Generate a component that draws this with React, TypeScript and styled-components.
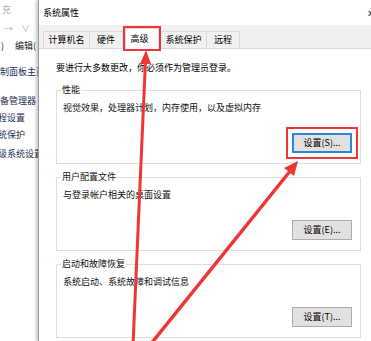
import styled, { createGlobalStyle } from 'styled-components';

const GlobalStyle = createGlobalStyle`
  html, body {
    margin: 0;
    padding: 0;
    background: #ffffff;
    overflow: hidden;
  }
  * {
    box-sizing: border-box;
  }
`;

const Screen = styled.div`
  position: relative;
  width: 371px;
  height: 341px;
  display: flex;
  overflow: hidden;
  font-family: "Noto Sans CJK SC", "Liberation Sans", sans-serif;
  font-size: 9px;
  color: #000;
  background: #fff;
`;

const LeftPanel = styled.div`
  width: 38px;
  flex-shrink: 0;
  display: flex;
  flex-direction: column;
  overflow: hidden;
  background: #fff;
`;

const LeftRow = styled.div<{ $gap: number; $indent?: number; $color?: string }>`
  margin-top: ${(p) => p.$gap}px;
  height: 12px;
  line-height: 12px;
  white-space: nowrap;
  text-indent: ${(p) => p.$indent ?? 0}px;
  color: ${(p) => p.$color ?? '#1c2f55'};
  display: flex;
  align-items: center;
`;

const NavGlyph = styled.span<{ $x: number; $dark?: boolean }>`
  margin-left: ${(p) => p.$x}px;
  color: ${(p) => (p.$dark ? '#222' : '#b4b4b4')};
  font-size: 9px;
`;

const Dialog = styled.div`
  flex: 1;
  display: flex;
  flex-direction: column;
  border-left: 1px solid #9c9c9c;
  box-shadow: -2px 0 3px rgba(0, 0, 0, 0.22);
  background: #fff;
  z-index: 1;
  overflow: hidden;
`;

const TitleBar = styled.div`
  height: 25px;
  display: flex;
  align-items: center;
  justify-content: space-between;
  padding-left: 4px;
  line-height: 12px;
`;

const CloseGlyph = styled.span`
  margin-right: -4px;
  font-size: 10px;
  color: #333;
`;

const TabStrip = styled.div`
  height: 24px;
  display: flex;
  align-items: flex-end;
  padding-left: 4px;
  background: #f0f0f0;
  border-bottom: 1px solid #d9d9d9;
`;

const Tab = styled.div<{ $active?: boolean }>`
  height: ${(p) => (p.$active ? 21 : 17)}px;
  min-width: 34px;
  padding: ${(p) => (p.$active ? '3px' : '0')} 4.5px 0;
  margin: 0 ${(p) => (p.$active ? '1px' : '-1px')} ${(p) => (p.$active ? '-1px' : '0')}
    ${(p) => (p.$active ? '3px' : '0')};
  line-height: ${(p) => (p.$active ? 13 : 16)}px;
  text-align: ${(p) => (p.$active ? 'left' : 'center')};
  border: 1px solid #d9d9d9;
  border-bottom: none;
  background: ${(p) => (p.$active ? '#fff' : '#f0f0f0')};
  outline: ${(p) => (p.$active ? '2px solid #ee3636' : 'none')};
  white-space: nowrap;
  position: relative;
  z-index: ${(p) => (p.$active ? 1 : 0)};
`;

const Content = styled.div`
  display: flex;
  flex-direction: column;
  gap: 7px;
  padding: 13px 10px 0 17px;
`;

const Intro = styled.div`
  line-height: 12px;
  margin-bottom: 3px;
  white-space: nowrap;
`;

const Group = styled.fieldset`
  margin: 0;
  padding: 0 8px 10px 6px;
  border: 1px solid #dedede;
  min-width: 0;
`;

const GroupTitle = styled.legend`
  padding: 0 1px;
  margin-left: -2px;
  line-height: 12px;
  color: #111;
`;

const Description = styled.div`
  margin-top: 6px;
  line-height: 12px;
  white-space: nowrap;
  color: #111;
`;

const ButtonRow = styled.div`
  margin-top: 19px;
  display: flex;
  justify-content: flex-end;
`;

const SettingsButton = styled.button<{ $focused?: boolean }>`
  width: 60px;
  height: 20px;
  padding: 0;
  font-family: inherit;
  font-size: 9px;
  line-height: 12px;
  color: #000;
  background: #e1e1e1;
  border: ${(p) => (p.$focused ? '2px solid #2a86d6' : '1px solid #adadad')};
  outline: ${(p) => (p.$focused ? '2px solid #ee3636' : 'none')};
  outline-offset: 4px;
`;

const Annotations = styled.svg`
  position: absolute;
  left: 0;
  top: 0;
  width: 371px;
  height: 341px;
  pointer-events: none;
  z-index: 5;
`;

const groups = [
  { title: '性能', text: '视觉效果，处理器计划，内存使用，以及虚拟内存', button: '设置(S)...', focused: true },
  { title: '用户配置文件', text: '与登录帐户相关的桌面设置', button: '设置(E)...' },
  { title: '启动和故障恢复', text: '系统启动、系统故障和调试信息', button: '设置(T)...' },
];

const tabs = ['计算机名', '硬件', '高级', '系统保护', '远程'];

export default function App() {
  return (
    <Screen>
      <GlobalStyle />
      <LeftPanel>
        <LeftRow $gap={4} $indent={2} $color="#b0b0b0">充</LeftRow>
        <LeftRow $gap={7}>
          <NavGlyph $x={4}>→</NavGlyph>
          <NavGlyph $x={8}>∨</NavGlyph>
          <NavGlyph $x={6} $dark>↑</NavGlyph>
        </LeftRow>
        <LeftRow $gap={5} $color="#222">
          <NavGlyph $x={1} $dark>)</NavGlyph>
          <NavGlyph $x={11} $dark>编辑(</NavGlyph>
        </LeftRow>
        <LeftRow $gap={14} $indent={-9}>控制面板主页</LeftRow>
        <LeftRow $gap={17} $indent={-9}>设备管理器</LeftRow>
        <LeftRow $gap={5} $indent={-11}>远程设置</LeftRow>
        <LeftRow $gap={5} $indent={-11}>系统保护</LeftRow>
        <LeftRow $gap={7} $indent={-11}>高级系统设置</LeftRow>
      </LeftPanel>

      <Dialog>
        <TitleBar>
          <span>系统属性</span>
          <CloseGlyph>✕</CloseGlyph>
        </TitleBar>
        <TabStrip>
          {tabs.map((t) => (
            <Tab key={t} $active={t === '高级'}>{t}</Tab>
          ))}
        </TabStrip>
        <Content>
          <Intro>要进行大多数更改，你必须作为管理员登录。</Intro>
          {groups.map((g) => (
            <Group key={g.title}>
              <GroupTitle>{g.title}</GroupTitle>
              <Description>{g.text}</Description>
              <ButtonRow>
                <SettingsButton $focused={g.focused}>{g.button}</SettingsButton>
              </ButtonRow>
            </Group>
          ))}
        </Content>
      </Dialog>

      <Annotations viewBox="0 0 371 341">
        <line x1="133" y1="345" x2="145.5" y2="60" stroke="#ee3636" strokeWidth="3" />
        <polygon points="146,50 151,64 140,64" fill="#ee3636" />
        <line x1="150" y1="345" x2="291" y2="170" stroke="#ee3636" strokeWidth="3.5" />
        <polygon points="298,161 294,176 284,168" fill="#ee3636" />
      </Annotations>
    </Screen>
  );
}
